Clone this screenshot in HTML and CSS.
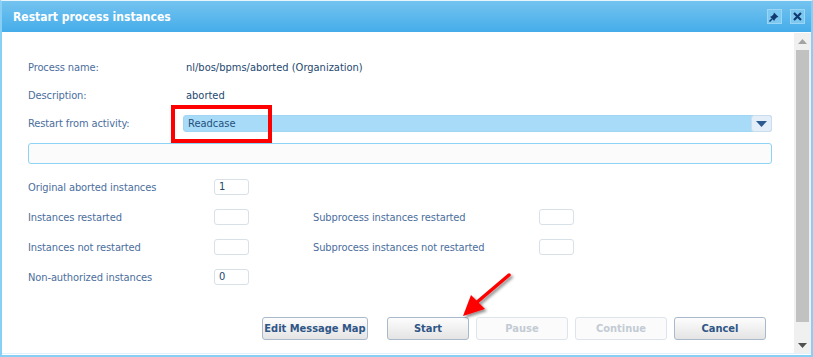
FILE: index.html
```html
<!DOCTYPE html>
<html lang="en">
<head>
<meta charset="UTF-8">
<title>Restart process instances</title>
<link rel="stylesheet" href="styles.css">
</head>
<body>
<div class="window">
    <div class="titlebar">
        <span class="title">Restart process instances</span>
        <div class="tools">
            <span class="tool">
                <svg width="11" height="11" viewBox="0 0 11 11"><path d="M5 1.5 L9.5 6 L7.6 6.6 L5.8 8.4 L5.2 10 L1 5.8 L2.6 5.2 L4.4 3.4 Z" fill="#123a70"/><path d="M3 8 L0.5 10.5" stroke="#123a70" stroke-width="1.4"/></svg>
            </span>
            <span class="tool">
                <svg width="9" height="9" viewBox="0 0 9 9"><path d="M1 1 L8 8 M8 1 L1 8" stroke="#123a70" stroke-width="2.2"/></svg>
            </span>
        </div>
    </div>
    <div class="body">
        <div class="content">
            <div class="info">
                <span class="label">Process name:</span>
                <span class="value">nl/bos/bpms/aborted (Organization)</span>
                <span class="label">Description:</span>
                <span class="value">aborted</span>
                <span class="label">Restart from activity:</span>
                <div class="select">
                    <span class="select-text">Readcase</span>
                    <span class="select-btn"><svg width="11" height="6" viewBox="0 0 11 6"><path d="M0 0 H11 L5.5 6 Z" fill="#2d5a90"/></svg></span>
                </div>
            </div>
            <div class="textbox"></div>
            <div class="stats">
                <span class="label">Original aborted instances</span>
                <span class="box">1</span>
                <span></span><span></span><span></span>

                <span class="label">Instances restarted</span>
                <span class="box"></span>
                <span></span>
                <span class="label">Subprocess instances restarted</span>
                <span class="box"></span>

                <span class="label">Instances not restarted</span>
                <span class="box"></span>
                <span></span>
                <span class="label">Subprocess instances not restarted</span>
                <span class="box"></span>

                <span class="label">Non-authorized instances</span>
                <span class="box">0</span>
                <span></span><span></span><span></span>
            </div>
            <div class="buttons">
                <button class="btn edit">Edit Message Map</button>
                <button class="btn start">Start</button>
                <button class="btn wide" disabled>Pause</button>
                <button class="btn wide" disabled>Continue</button>
                <button class="btn wide">Cancel</button>
            </div>
        </div>
        <div class="scrollbar">
            <div class="arrow"><svg width="9" height="5" viewBox="0 0 9 5"><path d="M0 5 H9 L4.5 0 Z" fill="#a3a3a3"/></svg></div>
            <div class="track"><div class="thumb"></div></div>
            <div class="arrow"><svg width="9" height="5" viewBox="0 0 9 5"><path d="M0 0 H9 L4.5 5 Z" fill="#505050"/></svg></div>
        </div>
    </div>
    <div class="highlight"></div>
    <svg class="pointer" width="70" height="60" viewBox="0 0 70 60">
        <defs>
            <filter id="sh" x="-30%" y="-30%" width="160%" height="160%">
                <feDropShadow dx="2" dy="2" stdDeviation="1.5" flood-color="#000" flood-opacity="0.45"/>
            </filter>
        </defs>
        <g filter="url(#sh)">
            <path d="M55 4 L22 32" stroke="#f00" stroke-width="3.5" stroke-linecap="round"/>
            <path d="M9 45 L17 24 L31 38 Z" fill="#f00"/>
        </g>
    </svg>
</div>
</body>
</html>
```

FILE: styles.css
```css
body {
  margin: 0;
  font-family: "DejaVu Sans", "Liberation Sans", sans-serif;
  font-stretch: condensed;
  background-color: #fff;
}

.window {
  position: relative;
  width: 813px;
  height: 357px;
  box-sizing: border-box;
  border: 2px solid #88cff6;
  border-top: 1px solid #e8f5fd;
  background-color: #fff;
}

.titlebar {
  height: 31px;
  display: flex;
  align-items: center;
  justify-content: space-between;
  padding: 0 6px 0 11px;
  background: linear-gradient(#74c3ef, #45adea);
}

.title {
  color: #fff;
  font-size: 12px;
  font-weight: bold;
}

.tools {
  display: flex;
  gap: 8px;
}

.tool {
  width: 15px;
  height: 15px;
  box-sizing: border-box;
  display: flex;
  align-items: center;
  justify-content: center;
  background-color: #7cc8f1;
  border: 1px solid #9bd6f5;
}

.body {
  display: flex;
  height: 321px;
  border-bottom: 1px solid #e2f1fb;
}

.content {
  flex: 1;
  padding: 27px 22px 0 26px;
}

.info {
  display: grid;
  grid-template-columns: 155px 1fr;
  grid-auto-rows: 17px;
  row-gap: 11px;
  align-items: center;
  font-size: 11px;
}

.label {
  color: #4b6e9d;
  font-size: 11px;
  letter-spacing: -0.1px;
  white-space: nowrap;
}

.value {
  color: #24486f;
  padding-left: 3px;
}

.select {
  display: flex;
  align-items: center;
  justify-content: space-between;
  height: 17px;
  box-sizing: border-box;
  background-color: #a8dbf7;
  border: 1px solid #a0d5f4;
  border-radius: 3px;
}

.select-text {
  color: #25507d;
  padding-left: 4px;
}

.select-btn {
  width: 21px;
  height: 17px;
  box-sizing: border-box;
  margin-right: -1px;
  display: flex;
  align-items: center;
  justify-content: center;
  background-color: #e3eef8;
  border: 1px solid #c9ddee;
  border-radius: 3px;
}

.textbox {
  margin-top: 11px;
  height: 21px;
  box-sizing: border-box;
  background-color: #fbfbfb;
  border: 1px solid #8dd2f7;
  border-radius: 3px;
}

.stats {
  margin-top: 15px;
  display: grid;
  grid-template-columns: 186px 35px 64px 226px 35px;
  grid-auto-rows: 16px;
  row-gap: 14px;
  align-items: center;
}

.box {
  height: 16px;
  box-sizing: border-box;
  border: 1px solid #d8e0e8;
  border-radius: 3px;
  font-size: 11px;
  color: #24486f;
  padding-left: 4px;
  line-height: 14px;
}

.buttons {
  margin-top: 32px;
  display: flex;
  justify-content: flex-end;
  gap: 7px;
  padding-right: 6px;
}

.btn {
  height: 23px;
  padding: 0;
  font-family: inherit;
  font-stretch: condensed;
  font-size: 11px;
  font-weight: bold;
  white-space: nowrap;
  color: #2f5686;
  background: linear-gradient(#fdfdfd, #e4e4e4);
  border: 1px solid #a9b9cb;
  border-radius: 3px;
}

.btn.edit {
  width: 106px;
  margin-right: 12px;
}

.btn.start {
  width: 82px;
}

.btn.wide {
  width: 92px;
}

.btn:disabled {
  color: #c3cbd4;
  background: #fbfbfb;
  border-color: #dde4ec;
}

.scrollbar {
  width: 17px;
  margin: 1px 0 0;
  display: flex;
  flex-direction: column;
  background-color: #f0f0f0;
}

.arrow {
  height: 16px;
  display: flex;
  align-items: center;
  justify-content: center;
}

.track {
  flex: 1;
  padding: 1px 2px 0;
}

.thumb {
  height: 272px;
  background-color: #c1c1c1;
}

.highlight {
  position: absolute;
  left: 169px;
  top: 104px;
  width: 101px;
  height: 38px;
  box-sizing: border-box;
  border: 4px solid #f00;
}

.pointer {
  position: absolute;
  left: 452px;
  top: 270px;
}
```
